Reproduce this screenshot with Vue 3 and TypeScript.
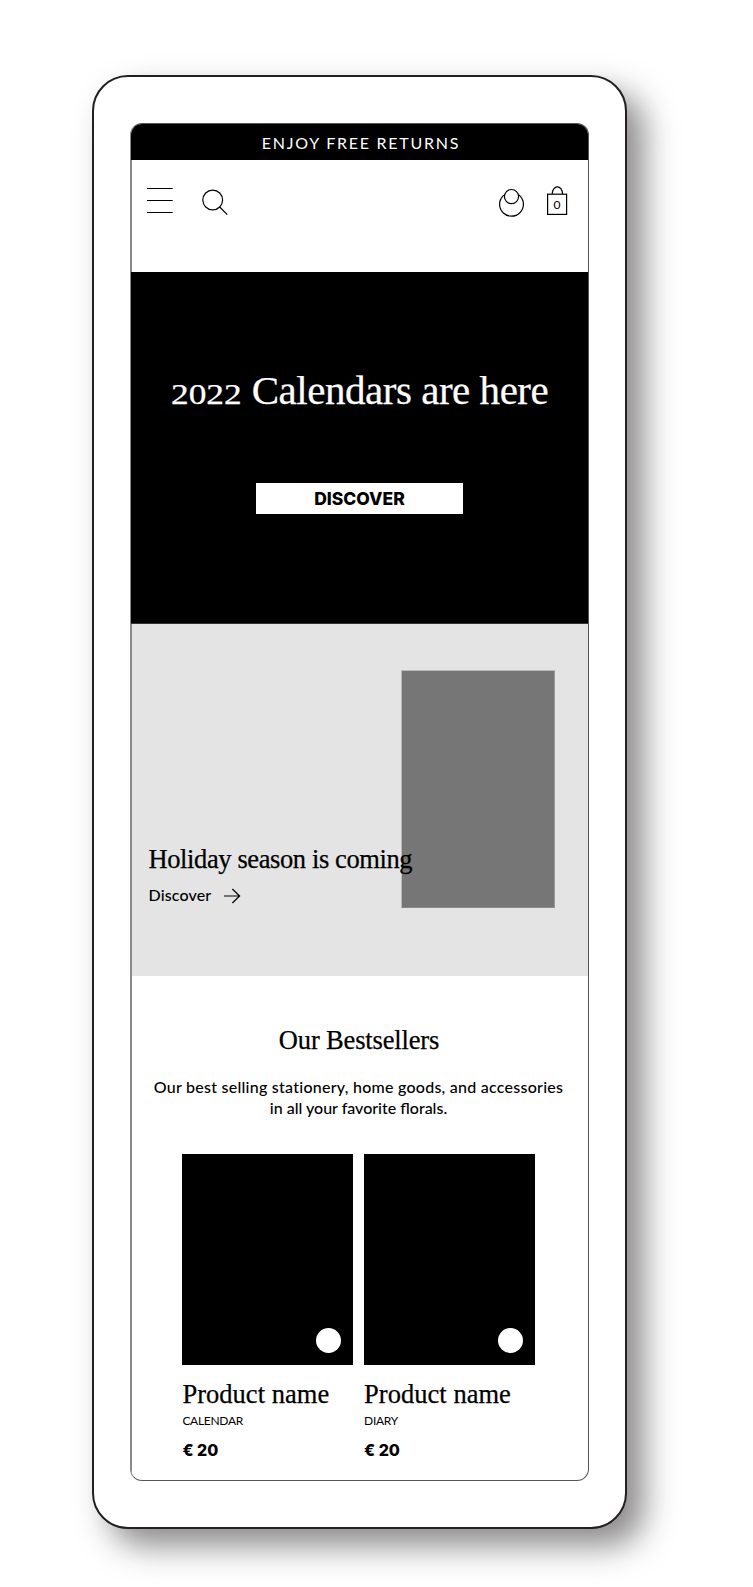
<script setup lang="ts">
interface Product {
  name: string
  category: string
  price: string
}

const products: Product[] = [
  { name: 'Product name', category: 'CALENDAR', price: '€ 20' },
  { name: 'Product name', category: 'DIARY', price: '€ 20' },
]
</script>

<template>
  <div class="page">
    <div class="device">
      <main class="screen">
        <div class="banner">ENJOY FREE RETURNS</div>

        <header class="header">
          <svg class="icon menu" width="26" height="40" viewBox="0 0 26 40">
            <path d="M0 8.5H25.7M0 20.5H25.7M0 32.5H25.7" />
          </svg>
          <svg class="icon" width="26" height="40" viewBox="0 0 26 40">
            <circle cx="10.7" cy="20" r="9.9" />
            <path d="M17.7 27L25.3 34.6" />
          </svg>
          <span class="spacer"></span>
          <svg class="icon user" width="25" height="40" viewBox="0 0 25 40">
            <circle cx="12.5" cy="24.3" r="11.9" />
            <circle class="head" cx="12.5" cy="16.6" r="7.1" />
          </svg>
          <svg class="icon" width="22" height="40" viewBox="0 0 22 40">
            <rect x="1.6" y="14.2" width="19" height="20.2" />
            <path d="M6.2 14C6.2 9.8 8.6 6.9 11.4 6.9S16.6 9.8 16.6 14" />
            <text x="10.9" y="29" text-anchor="middle">0</text>
          </svg>
        </header>

        <section class="hero">
          <h1><span class="year">2022</span><span>Calendars are here</span></h1>
          <button class="cta" type="button">DISCOVER</button>
        </section>

        <section class="promo">
          <div class="promo-image"></div>
          <div class="promo-text">
            <h2>Holiday season is coming</h2>
            <a class="link">
              Discover
              <svg class="icon" width="17" height="16" viewBox="0 0 17 16">
                <path d="M0 8H15.6M8.4 1L15.6 8L8.4 15" />
              </svg>
            </a>
          </div>
        </section>

        <section class="best">
          <h2>Our Bestsellers</h2>
          <p class="intro">
            <span class="first">Our best selling stationery, home goods, and accessories</span>
            <span>in all your favorite florals.</span>
          </p>
          <div class="products">
            <article v-for="product in products" :key="product.category">
              <div class="photo"><i class="dot"></i></div>
              <h3>{{ product.name }}</h3>
              <p class="category">{{ product.category }}</p>
              <p class="price">{{ product.price }}</p>
            </article>
          </div>
        </section>
      </main>
    </div>
  </div>
</template>

<style>
body {
  background: #fff;
}
</style>

<style scoped>
* {
  box-sizing: border-box;
}

.page {
  height: 1587px;
  padding: 75px 0 0 92px;
  overflow: hidden;
  font-family: Lato, "Liberation Sans", sans-serif;
  color: #000;
}

.device {
  width: 535px;
  height: 1454px;
  padding: 46px 36px;
  border: 2px solid #231f20;
  border-radius: 36px;
  background: #fff;
  box-shadow: 17px 17px 32px rgba(35, 31, 32, 0.52);
}

.screen {
  display: flex;
  flex-direction: column;
  width: 459px;
  height: 1358px;
  border: 1px solid #555;
  border-left-color: #888;
  border-radius: 12px;
  overflow: hidden;
}

h1,
h2,
h3,
p {
  margin: 0;
  font-weight: 400;
}

h1,
h2,
h3 {
  font-family: "Liberation Serif", serif;
  -webkit-text-stroke: 0.25px currentColor;
}

h2,
h3 {
  font-size: 26.5px;
  line-height: 32px;
  white-space: nowrap;
}

.icon {
  display: block;
  flex: none;
  overflow: visible;
  fill: none;
  stroke: #000;
  stroke-width: 1.2;
}

.icon text {
  fill: #000;
  stroke: none;
  font-size: 12px;
}

.banner {
  height: 36px;
  padding-left: 3px;
  background: #000;
  color: #fff;
  font-size: 16px;
  line-height: 38px;
  letter-spacing: 1.75px;
  text-align: center;
}

.header {
  display: flex;
  height: 112px;
  padding: 20px 20px 0 15px;
  border-left: 1px solid #888;
}

.menu {
  margin-right: 29px;
}

.spacer {
  flex: 1;
}

.user {
  margin-right: 22px;
}

.head {
  fill: #fff;
}

.hero {
  display: flex;
  flex-direction: column;
  align-items: center;
  height: 352px;
  padding-top: 93px;
  border-bottom: 1px solid #333;
  background: #000;
}

h1 {
  display: flex;
  align-items: baseline;
  gap: 10px;
  height: 50px;
  color: #fff;
  font-size: 41px;
  line-height: 50px;
  letter-spacing: -0.47px;
  white-space: nowrap;
}

.year {
  width: 71px;
  font-size: 28.5px;
  letter-spacing: 0;
  transform: scaleX(1.24);
  transform-origin: left;
}

.cta {
  width: 207px;
  height: 31px;
  margin-top: 68px;
  padding: 0;
  border: 0;
  background: #fff;
  color: #000;
  font: 800 17.5px/32px Inter, sans-serif;
}

.promo {
  display: grid;
  height: 352px;
  border-left: 1px solid #888;
  background: #e4e4e4;
}

.promo > * {
  grid-area: 1 / 1;
}

.promo-image {
  justify-self: end;
  width: 154px;
  height: 238px;
  margin: 46px 33px 0 0;
  border: 1px solid #bbb;
  border-right-color: #999;
  border-bottom-color: #888;
  background: #767676;
}

.promo-text {
  z-index: 1;
  margin: 219px 0 0 16.5px;
}

.promo h2 {
  letter-spacing: -0.39px;
}

.link {
  display: flex;
  gap: 13px;
  margin-top: 10px;
  font-size: 16px;
  font-weight: 500;
  line-height: 20px;
  letter-spacing: 0.15px;
}

.link .icon {
  margin-top: 3px;
}

.best {
  flex: 1;
  padding-top: 48px;
  border-left: 1px solid #888;
  text-align: center;
}

.best h2 {
  padding-right: 2px;
  letter-spacing: -0.15px;
}

.intro {
  margin-top: 20px;
  padding-right: 3px;
  font-size: 16px;
  font-weight: 500;
  line-height: 21px;
  white-space: nowrap;
}

.intro span {
  display: block;
}

.first {
  letter-spacing: 0.25px;
}

.products {
  display: grid;
  grid-template-columns: repeat(2, 170.5px);
  gap: 11.2px;
  margin: 36px 0 0 50.4px;
  text-align: left;
}

.photo {
  display: flex;
  align-items: flex-end;
  justify-content: flex-end;
  height: 211px;
  padding: 0 12px 12px 0;
  background: #000;
}

.dot {
  width: 25px;
  height: 25px;
  border-radius: 50%;
  background: #fff;
}

h3 {
  margin: 13px 0 0;
}

.products h3 {
  letter-spacing: 0.03px;
}

.category {
  margin-top: 3px;
  font-size: 12px;
  line-height: 16px;
  letter-spacing: -0.3px;
}

.price {
  margin-top: 11px;
  font: 800 16px/20px Inter, sans-serif;
}
</style>
